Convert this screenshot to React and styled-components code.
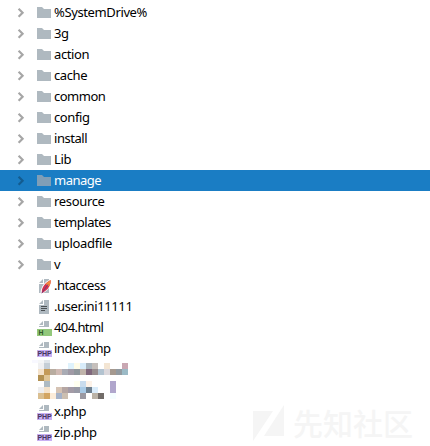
import React from "react";
import styled, { createGlobalStyle } from "styled-components";

const GlobalStyle = createGlobalStyle`
  body { margin: 0; background: #fff; overflow: hidden; }
`;

const Panel = styled.main`
  position: relative;
  box-sizing: border-box;
  width: 430px;
  height: 446px;
  padding-top: 2px;
  overflow: hidden;
  background: #fff;
  font-family: "Noto Sans", "Open Sans", sans-serif;
  font-size: 13px;
`;

const Row = styled.div`
  display: flex;
  align-items: center;
  height: 21px;
  background: ${(p) => (p.$selected ? "#1a7dc4" : "transparent")};
  color: ${(p) => (p.$selected ? "#fff" : "#000")};
`;

const Arrow = styled.svg`
  flex: none;
  width: 10px;
  height: 21px;
  margin-left: 16px;
  fill: none;
  stroke: ${(p) => (p.$selected ? "#135c90" : "#a6a6a6")};
  stroke-width: 2.2;
`;

const Icon = styled.svg`
  flex: none;
  width: 17px;
  height: 21px;
  margin-left: ${(p) => (p.$leaf ? "36px" : "10px")};
`;

const Label = styled.span`
  margin-left: 1px;
  line-height: 21px;
  white-space: pre;
  letter-spacing: ${(p) => p.$spacing || 0}px;
`;

const Censored = styled.svg`
  display: block;
  width: 96px;
  height: 42px;
  margin-left: 32px;
`;

const Watermark = styled.div`
  position: absolute;
  left: 253px;
  top: 402px;
  display: flex;
  align-items: center;
  gap: 9px;
  height: 42px;
  color: #f5f5f5;
  font: 500 30px/40px "Noto Sans CJK SC", sans-serif;
`;

const WatermarkText = styled.span`
  padding-bottom: 3px;
`;

const BadgeText = styled.text`
  font: bold 7.8px "Liberation Sans", sans-serif;
  fill: ${(p) => p.$color};
`;

const FolderArt = ({ selected }) => (
  <path d="M1 5h5l2 2h7v9H1z" fill={selected ? "#7f9eb7" : "#afb9c0"} />
);

const PageArt = ({ bottom }) => (
  <g fill="#afb9c0">
    <path d="M7 4v4H3z" />
    <path d={`M8 4h5v${bottom - 4}H3V9h5z`} />
  </g>
);

const FileArt = ({ kind }) => {
  if (kind === "htaccess")
    return (
      <>
        <PageArt bottom={18} />
        <path d="M4.5 18.5C4.5 12 9 6 15.5 4 16.5 9 12.5 15.5 7 18z" fill="#fff" />
        <path d="M6 18C5 13 9 8 14.6 5c.8 4.6-2.6 10-7.4 12.4z" fill="#d5314f" />
        <path d="M9.6 9Q12 6.4 14.6 5q.6 3.2-1.4 6.6z" fill="#f4893b" />
        <path d="M5.7 18.2L12 9.4" stroke="#793b78" />
      </>
    );
  if (kind === "text")
    return (
      <>
        <PageArt bottom={18} />
        <path d="M5 10.5h6M5 12.5h6M5 14.5h4" stroke="#4b5054" />
      </>
    );
  const html = kind === "html";
  return (
    <>
      <PageArt bottom={10} />
      <path d="M1 12h15v7H1z" fill={html ? "#92c87b" : "#c9b0f3"} />
      <BadgeText
        x={html ? 2.5 : 1.4}
        y={18.4}
        $color={html ? "#32592b" : "#46365e"}
        textLength={html ? 5 : 14.4}
        lengthAdjust="spacingAndGlyphs"
      >
        {html ? "H" : "PHP"}
      </BadgeText>
    </>
  );
};

const folders = [
  ["%SystemDrive%", -0.38], ["3g", -0.5], ["action", -0.4], ["cache", -0.4],
  ["common", -0.5], ["config", -0.4], ["install", -0.45], ["Lib", -0.3],
  ["manage", -0.5], ["resource", -0.33], ["templates", -0.48],
  ["uploadfile", -0.3], ["v", 0],
];

const filesAbove = [
  [".htaccess", "htaccess", -0.48], [".user.ini11111", "text", -0.38],
  ["404.html", "html", -0.6], ["index.php", "php", -0.48],
];

const filesBelow = [["x.php", "php", -0.5], ["zip.php", "php", -0.33]];

const mosaic = [
  "f0f0f2 c5ced6 - - - dff2fc fffce8 d8ecfa a9b4bc c5bfbb - f3e5d3 - - c9a7b2",
  "f4e2cb c49a58 b8aca0 d0bab4 a9abb4 a09aa6 8f969c c0b4ab 80687c 978c8e b3c3d0 dcd8dc a5998f 929aa0 9bbac6",
  "b39152 e0c596",
  "- aebbc3 - - - - fffff0 c9dcee fdf2e8 - - - b0a6cc",
  "eeeeef f4e2ca - d5c3b4 b5a6a3 a39ba6 999aa6 a8cae6 6e8090 daecfa - - b0a6cc",
  "dabf91 d2a562 fcecd9 a5b2c8 ccbfb1 - - 9a99a2 - bab2a6 726c68 - f5fdff",
].map((line) => line.split(" "));

const FileRow = ({ name, kind, spacing }) => (
  <Row>
    <Icon $leaf viewBox="0 0 17 21"><FileArt kind={kind} /></Icon>
    <Label $spacing={spacing}>{name}</Label>
  </Row>
);

export default function App() {
  return (
    <>
      <GlobalStyle />
      <Panel>
        {folders.map(([name, spacing]) => {
          const selected = name === "manage";
          return (
            <Row key={name} $selected={selected}>
              <Arrow $selected={selected} viewBox="0 0 10 21"><path d="M2.6 6.7l4 4-4 4" /></Arrow>
              <Icon viewBox="0 0 17 21"><FolderArt selected={selected} /></Icon>
              <Label $spacing={spacing}>{name}</Label>
            </Row>
          );
        })}
        {filesAbove.map(([name, kind, spacing]) => (
          <FileRow key={name} name={name} kind={kind} spacing={spacing} />
        ))}
        <Censored viewBox="0 0 96 42" shapeRendering="crispEdges">
          <path d="M0 1h6v3H0z" fill="#f8f8ff" />
          <path d="M6 1h6v3H6z" fill="#f5f6f7" />
          <path d="M12 1h6v3h-6z" fill="#e0e5ea" />
          {mosaic.flatMap((line, y) =>
            line.map((color, x) =>
              color === "-" ? null : (
                <rect key={`${x}-${y}`} x={6 + x * 6} y={4 + y * 6} width="6" height="6" fill={`#${color}`} />
              )
            )
          )}
        </Censored>
        {filesBelow.map(([name, kind, spacing]) => (
          <FileRow key={name} name={name} kind={kind} spacing={spacing} />
        ))}
        <Watermark>
          <svg width="31" height="38" viewBox="0 0 31 38" fill="currentColor">
            <path d="M0 7h20L0 37zM31 1v31H11z" />
          </svg>
          <WatermarkText>先知社区</WatermarkText>
        </Watermark>
      </Panel>
    </>
  );
}
